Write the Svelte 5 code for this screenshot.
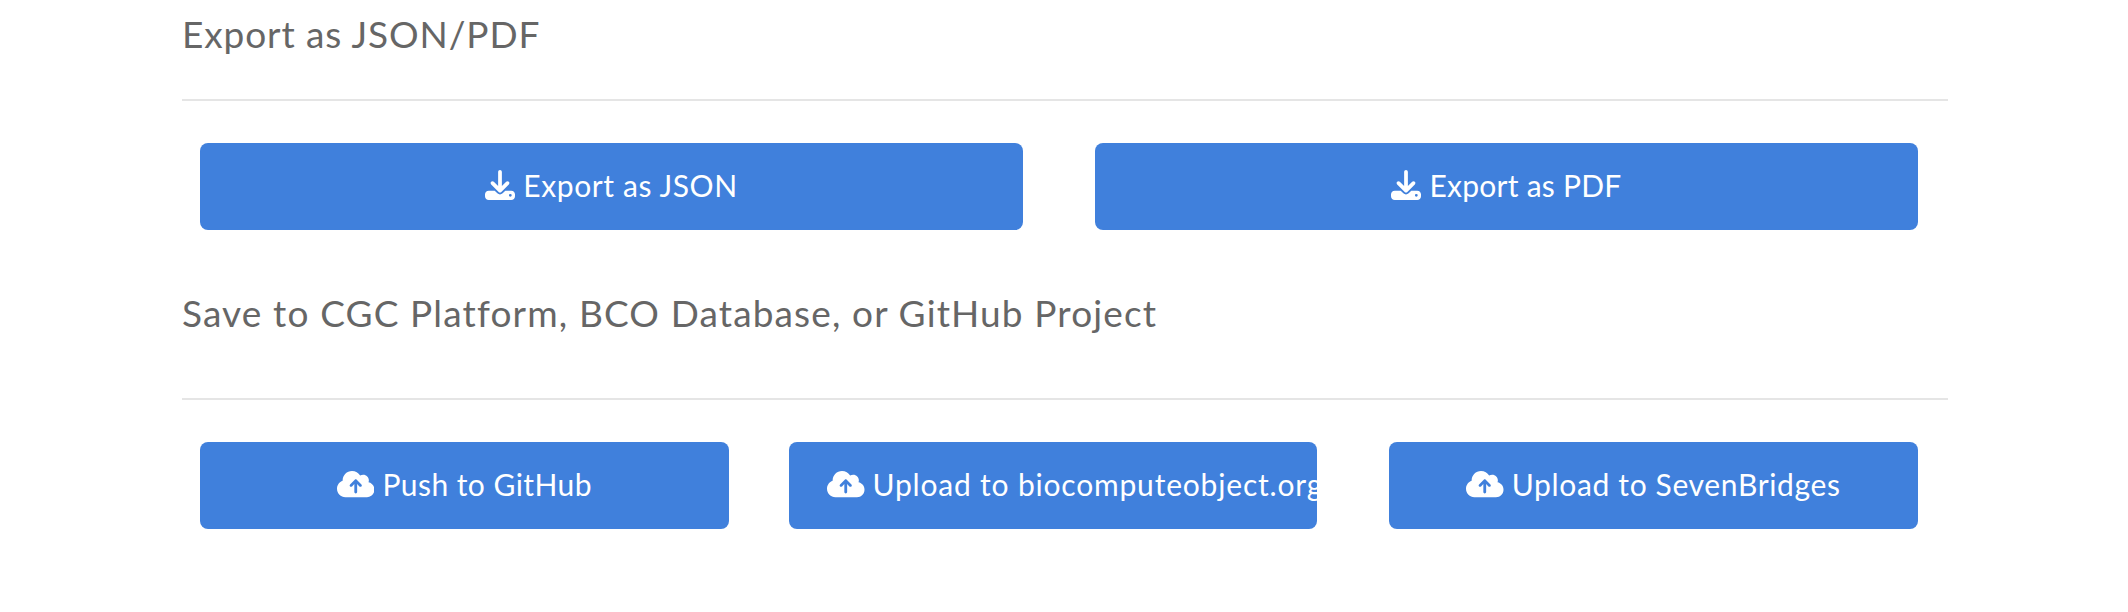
<script>
  const icons = {
    download: {
      width: 512,
      path: 'M288 32c0-17.7-14.3-32-32-32s-32 14.3-32 32V274.7l-73.4-73.4c-12.5-12.5-32.8-12.5-45.3 0s-12.5 32.8 0 45.3l128 128c12.5 12.5 32.8 12.5 45.3 0l128-128c12.5-12.5 12.5-32.8 0-45.3s-32.8-12.5-45.3 0L288 274.7V32zM64 352c-35.3 0-64 28.7-64 64v32c0 35.3 28.7 64 64 64H448c35.3 0 64-28.7 64-64V416c0-35.3-28.7-64-64-64H346.5l-45.3 45.3c-25 25-65.5 25-90.5 0L165.5 352H64zm368 56a24 24 0 1 1 0 48 24 24 0 1 1 0-48z'
    },
    upload: {
      width: 640,
      path: 'M144 480C64.5 480 0 415.5 0 336c0-62.8 40.2-116.2 96.2-135.9C96.1 197.4 96 194.7 96 192c0-88.4 71.6-160 160-160c59.3 0 111 32.2 138.7 80.2C409.9 102 428.3 96 448 96c53 0 96 43 96 96c0 12.2-2.3 23.8-6.4 34.6C596 238.4 640 290.1 640 352c0 70.7-57.3 128-128 128H144zm79-217c-9.4 9.4-9.4 24.6 0 33.9s24.6 9.4 33.9 0l39-39V392c0 13.3 10.7 24 24 24s24-10.7 24-24V257.9l39 39c9.4 9.4 24.6 9.4 33.9 0s9.4-24.6 0-33.9l-80-80c-9.4-9.4-24.6-9.4-33.9 0l-80 80z'
    }
  };
  const sections = [
    {
      title: 'Export as JSON/PDF',
      name: 'export',
      tracking: 0.9,
      actions: [
        { icon: 'download', label: 'Export as JSON', tracking: 0.6 },
        { icon: 'download', label: 'Export as PDF', tracking: 0.25 }
      ]
    },
    {
      title: 'Save to CGC Platform, BCO Database, or GitHub Project',
      name: 'save',
      tracking: 1.14,
      actions: [
        { icon: 'upload', label: 'Push to GitHub', tracking: 0.45 },
        { icon: 'upload', label: 'Upload to biocomputeobject.org', tracking: 0.81 },
        { icon: 'upload', label: 'Upload to SevenBridges', tracking: 0.65 }
      ]
    }
  ];
</script>

<main>
  {#each sections as section}
    <section class={section.name}>
      <h2 style:letter-spacing="{section.tracking}px">{section.title}</h2>
      <hr />
      <div class="actions">
        {#each section.actions as action}
          <button type="button">
            <svg viewBox="0 0 {icons[action.icon].width} 512" class={action.icon} aria-hidden="true">
              <path d={icons[action.icon].path} />
            </svg>
            <span style:letter-spacing="{action.tracking}px">{action.label}</span>
          </button>
        {/each}
      </div>
    </section>
  {/each}
</main>

<style>
  :global(body) { background: #fff; }
  main {
    box-sizing: border-box;
    height: 612px;
    padding: 0 180px 0 182px;
    overflow: hidden;
    font-family: Lato, sans-serif;
  }
  h2 {
    margin: 0;
    height: 48px;
    color: #666;
    font-size: 37px;
    font-weight: 400;
    line-height: 48px;
    white-space: nowrap;
  }
  .export h2 { padding: 10px 0 41px; }
  .save h2 { padding: 59px 0 61px; }
  hr { height: 2px; margin: 0; border: 0; background: #e5e5e5; }
  .actions { display: grid; padding: 42px 30px 0 18px; }
  .export .actions { grid-template-columns: 1fr 1fr; column-gap: 72px; }
  .save .actions { grid-template-columns: 589px 600px 529px; }
  .save button:nth-child(1) { width: 529px; }
  .save button:nth-child(2) { width: 528px; justify-content: flex-start; }
  button {
    box-sizing: border-box;
    display: flex;
    align-items: center;
    justify-content: center;
    gap: 8px;
    height: 87px;
    padding: 0 38px 4px;
    overflow: hidden;
    border: 0;
    border-radius: 8px;
    color: #fff;
    background: #4080dc;
    font: 400 30px/40px Lato, sans-serif;
    white-space: nowrap;
  }
  svg { flex: none; height: 30px; fill: currentColor; }
  .download { width: 30px; }
  .upload { width: 37.5px; }
</style>
